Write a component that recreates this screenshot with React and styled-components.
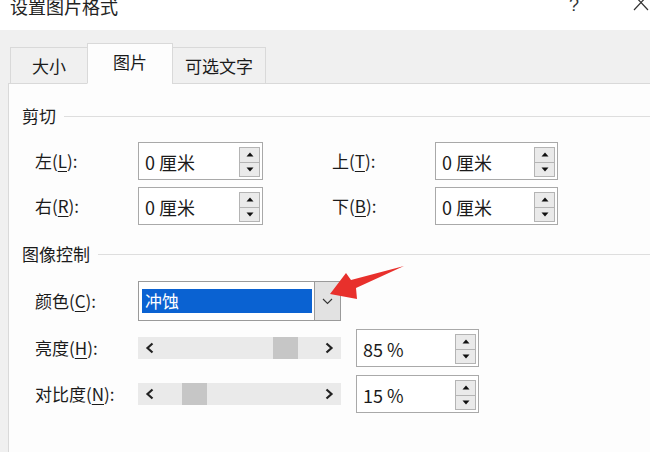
import React from "react";
import styled, { createGlobalStyle } from "styled-components";

const Global = createGlobalStyle`
  html, body { margin: 0; padding: 0; background: #ffffff; }
  body { font-family: "Noto Sans CJK SC", "Noto Sans", sans-serif; color: #1b1b1b; }
`;

const Root = styled.div`
  position: relative;
  width: 650px;
  height: 452px;
  overflow: hidden;
  display: flex;
  flex-direction: column;
  background: #f0f0f0;
`;

const TitleBar = styled.div`
  height: 30px;
  flex: none;
  background: #ffffff;
  display: flex;
  align-items: flex-start;
  padding-left: 10px;
  overflow: hidden;
`;

const Title = styled.div`
  font-size: 18px;
  line-height: 18px;
  margin-top: -3px;
  color: #222;
`;

const TitleButtons = styled.div`
  margin-left: auto;
  display: flex;
  align-items: flex-start;
  gap: 54px;
  padding-right: 1px;
`;

const Help = styled.div`
  font-family: "Liberation Sans", sans-serif;
  font-size: 18px;
  line-height: 18px;
  margin-top: -4px;
  color: #333;
`;

const CloseIcon = styled.svg`
  display: block;
  margin-top: -3px;
`;

const Body = styled.div`
  flex: 1;
  display: flex;
  flex-direction: column;
  padding: 14px 0 0 8px;
`;

const TabRow = styled.div`
  display: flex;
  align-items: flex-end;
  height: 40px;
  padding-left: 2px;
  margin-bottom: -1px;
  position: relative;
  z-index: 1;
`;

const Tab = styled.div`
  box-sizing: border-box;
  width: ${(p) => p.$w}px;
  height: ${(p) => (p.$active ? 41 : 37)}px;
  display: flex;
  align-items: center;
  justify-content: center;
  font-size: 17px;
  color: #1b1b1b;
  background: ${(p) => (p.$active ? "#fdfdfd" : "#f0f0f0")};
  border: 1px solid #d9d9d9;
  border-bottom: ${(p) => (p.$active ? "1px solid #fdfdfd" : "1px solid #d9d9d9")};
  margin-left: ${(p) => (p.$first ? 0 : -1)}px;
  padding-bottom: ${(p) => (p.$active ? 4 : 0)}px;
`;

const Panel = styled.div`
  flex: 1;
  background: #fdfdfd;
  border-top: 1px solid #d9d9d9;
  border-left: 1px solid #d9d9d9;
  padding: 20px 0 0 13px;
`;

const SectionHeader = styled.div`
  display: flex;
  align-items: center;
  height: 24px;
  margin-top: ${(p) => p.$mt || 0}px;
`;

const SectionLabel = styled.div`
  font-size: 17px;
  line-height: 24px;
  color: #1b1b1b;
`;

const SectionLine = styled.div`
  flex: 1;
  height: 1px;
  background: #dedede;
  margin-left: 8px;
`;

const CropGrid = styled.div`
  display: grid;
  grid-template-columns: 103px 125px 69px 103px 123px;
  grid-auto-rows: 38px;
  row-gap: 7px;
  margin: 14px 0 0 13px;
  align-items: center;
`;

const ImageGrid = styled.div`
  display: grid;
  grid-template-columns: 88px 203px 123px;
  column-gap: 15px;
  grid-template-rows: 40px 38px 38px;
  row-gap: 8px;
  margin: 15px 0 0 13px;
  align-items: center;
`;

const Label = styled.div`
  font-size: 17px;
  line-height: 24px;
  white-space: nowrap;
  color: #1b1b1b;
  grid-column: ${(p) => p.$col || "auto"};
`;

const Key = styled.span`
  text-decoration: underline;
  text-underline-offset: 3px;
  text-decoration-thickness: 1px;
`;

const SpinBox = styled.div`
  box-sizing: border-box;
  height: 38px;
  border: 1px solid #a9a9a9;
  background: #ffffff;
  display: flex;
  align-items: stretch;
  padding: 4px 2px 2px 6px;
`;

const SpinValue = styled.div`
  flex: 1;
  font-size: 18px;
  line-height: 30px;
  color: #1b1b1b;
  white-space: pre;
`;

const SpinButtons = styled.div`
  width: 21px;
  display: flex;
  flex-direction: column;
  box-sizing: border-box;
  border: 1px solid #b4b4b4;
`;

const SpinButton = styled.div`
  flex: 1;
  background: #eaeaea;
  display: flex;
  align-items: center;
  justify-content: center;
  & + & {
    border-top: 1px solid #b4b4b4;
  }
`;

const Combo = styled.div`
  box-sizing: border-box;
  height: 40px;
  border: 1px solid #9a9a9a;
  background: #ffffff;
  display: flex;
  align-items: stretch;
`;

const ComboValue = styled.div`
  flex: 1;
  margin: 7px 2px 7px 3px;
  background: #0a62d2;
  color: #ffffff;
  font-size: 17px;
  line-height: 24px;
  padding-left: 3px;
`;

const ComboButton = styled.div`
  width: 25px;
  margin: -1px -1px -1px 0;
  border: 1px solid #9a9a9a;
  background: #e2e2e2;
  display: flex;
  align-items: center;
  justify-content: center;
`;

const ScrollBar = styled.div`
  height: 22px;
  background: #eaeaea;
  display: flex;
  align-items: stretch;
`;

const ScrollArrow = styled.div`
  width: 24px;
  display: flex;
  align-items: center;
  justify-content: center;
`;

const Track = styled.div`
  flex: 1;
  position: relative;
`;

const Thumb = styled.div`
  position: absolute;
  top: 0;
  bottom: 0;
  width: 25px;
  background: #c6c6c6;
`;

const ArrowOverlay = styled.svg`
  position: absolute;
  left: 0;
  top: 0;
  pointer-events: none;
`;

const Up = () => (
  <svg width="8" height="5" viewBox="0 0 8 5"><path d="M4 0.5 L7.5 4.5 L0.5 4.5 Z" fill="#111" /></svg>
);
const Down = () => (
  <svg width="8" height="5" viewBox="0 0 8 5"><path d="M0.5 0.5 L7.5 0.5 L4 4.5 Z" fill="#111" /></svg>
);

const Spin = ({ value }) => (
  <SpinBox>
    <SpinValue>{value}</SpinValue>
    <SpinButtons>
      <SpinButton><Up /></SpinButton>
      <SpinButton><Down /></SpinButton>
    </SpinButtons>
  </SpinBox>
);

const Chevron = ({ dir }) => (
  <svg width="10" height="12" viewBox="0 0 10 12">
    <path
      d={dir === "left" ? "M7.5 1.5 L2.5 6 L7.5 10.5" : "M2.5 1.5 L7.5 6 L2.5 10.5"}
      fill="none"
      stroke="#222"
      strokeWidth="2.2"
    />
  </svg>
);

const Scroll = ({ value }) => (
  <ScrollBar>
    <ScrollArrow><Chevron dir="left" /></ScrollArrow>
    <Track>
      <Thumb style={{ left: `calc((100% - 25px) * ${value / 100})` }} />
    </Track>
    <ScrollArrow><Chevron dir="right" /></ScrollArrow>
  </ScrollBar>
);

export default function App() {
  return (
    <>
      <Global />
      <Root>
        <TitleBar>
          <Title>设置图片格式</Title>
          <TitleButtons>
            <Help>?</Help>
            <CloseIcon width="16" height="14" viewBox="0 0 16 14">
              <path d="M1 -2 L15 13 M15 -2 L1 13" stroke="#333" strokeWidth="1.2" />
            </CloseIcon>
          </TitleButtons>
        </TitleBar>
        <Body>
          <TabRow>
            <Tab $w={78} $first>大小</Tab>
            <Tab $w={86} $active>图片</Tab>
            <Tab $w={94}>可选文字</Tab>
          </TabRow>
          <Panel>
            <SectionHeader>
              <SectionLabel>剪切</SectionLabel>
              <SectionLine />
            </SectionHeader>
            <CropGrid>
              <Label>左(<Key>L</Key>):</Label>
              <Spin value="0 厘米" />
              <Label $col="4">上(<Key>T</Key>):</Label>
              <Spin value="0 厘米" />
              <Label>右(<Key>R</Key>):</Label>
              <Spin value="0 厘米" />
              <Label $col="4">下(<Key>B</Key>):</Label>
              <Spin value="0 厘米" />
            </CropGrid>
            <SectionHeader $mt={17}>
              <SectionLabel>图像控制</SectionLabel>
              <SectionLine />
            </SectionHeader>
            <ImageGrid>
              <Label>颜色(<Key>C</Key>):</Label>
              <Combo>
                <ComboValue>冲蚀</ComboValue>
                <ComboButton>
                  <svg width="11" height="7" viewBox="0 0 11 7">
                    <path d="M1 1 L5.5 5.5 L10 1" fill="none" stroke="#333" strokeWidth="1.1" />
                  </svg>
                </ComboButton>
              </Combo>
              <div />
              <Label>亮度(<Key>H</Key>):</Label>
              <Scroll value={85} />
              <Spin value="85 %" />
              <Label>对比度(<Key>N</Key>):</Label>
              <Scroll value={15} />
              <Spin value="15 %" />
            </ImageGrid>
          </Panel>
        </Body>
        <ArrowOverlay width="650" height="452" viewBox="0 0 650 452">
          <polygon
            points="330,294 346,273 351,280 404,266 356,288 357,299"
            fill="#e8302c"
          />
        </ArrowOverlay>
      </Root>
    </>
  );
}
